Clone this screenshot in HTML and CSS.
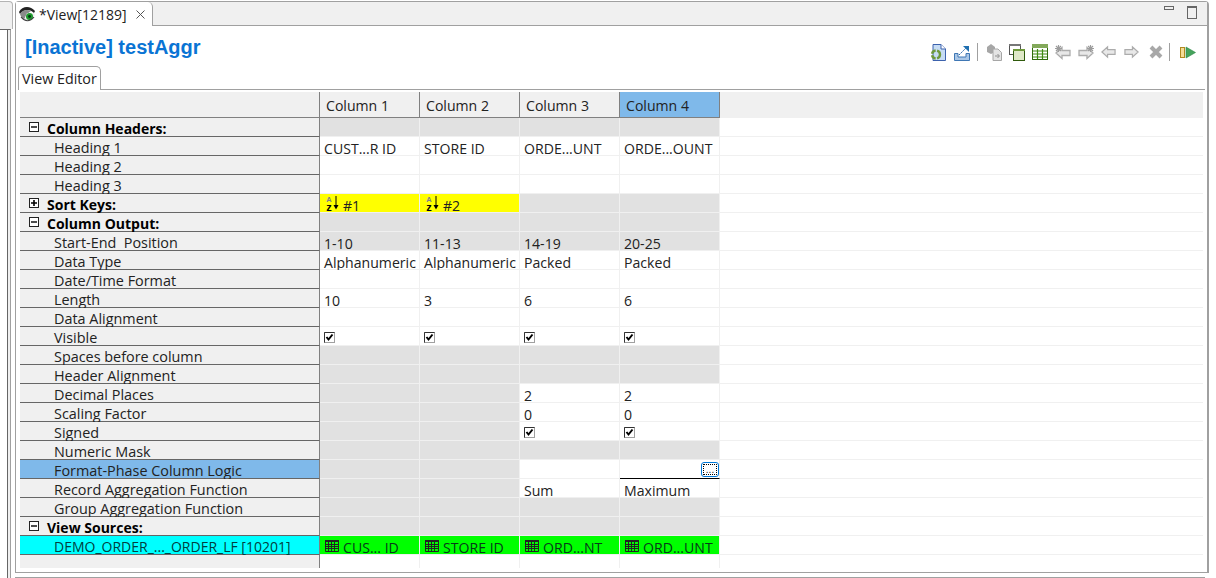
FILE: index.html
```html
<!DOCTYPE html>
<html lang="en">

<head>
  <meta charset="UTF-8">
  <title>View Editor</title>
  <link rel="stylesheet" href="styles.css">
</head>

<body>
  <!-- Shared icons -->
  <svg class="defs" width="0" height="0">
    <symbol id="i-check" viewBox="0 0 11 11">
      <rect x="0.5" y="0.5" width="10" height="10" fill="#fff" stroke="#a0a0a0"/>
      <path d="M0.5 10.5V0.5H10.5" fill="none" stroke="#333"/>
      <path d="M2.5 5L4.5 7.5L8.5 2.5" fill="none" stroke="#000" stroke-width="2"/>
    </symbol>
    <symbol id="i-grid" viewBox="0 0 14 12">
      <rect x="0" y="0" width="14" height="2" fill="#222"/>
      <path d="M0.5 0V11.5H13.5V0M0 4.5H14M0 6.5H14M0 8.5H14M3.5 2V12M6.5 2V12M9.5 2V12" fill="none" stroke="#222"/>
    </symbol>
    <symbol id="i-minus" viewBox="0 0 10 10">
      <rect x="0.5" y="0.5" width="9" height="9" fill="#fff" stroke="#222"/>
      <path d="M2 5H8" stroke="#000" stroke-width="1.4"/>
    </symbol>
    <symbol id="i-plus" viewBox="0 0 10 10">
      <rect x="0.5" y="0.5" width="9" height="9" fill="#fff" stroke="#222"/>
      <path d="M2 5H8M5 2V8" stroke="#000" stroke-width="1.6"/>
    </symbol>
    <symbol id="i-back" viewBox="0 0 16 16">
      <path d="M1 8L7 2.5V5.5H15V10.5H7V13.5Z" fill="#e8e8e8" stroke="#acacac" stroke-width="1.3"/>
    </symbol>
    <symbol id="i-star" viewBox="0 0 7 7">
      <path d="M3.5 0V7M0 3.5H7M1 1L6 6M6 1L1 6" stroke="#9c9c9c" stroke-width="1.2"/>
    </symbol>
  </svg>

  <div class="workbench">
    <div class="side">
      <div class="side-top"></div>
      <div class="side-panel"></div>
    </div>

    <div class="main">
      <section class="editor">
        <div class="tabbar">
          <div class="tab">
            <svg class="tab-icon" width="17" height="16" viewBox="0 0 17 16">
              <path d="M0 6C3 0 11 -1 16 5L15 7C11 3 5 3 1 8Z" fill="#222"/>
              <path d="M1 8C3 4 8 3 12 5L8 8L5 14C3 13 2 11 1 8Z" fill="#8a8a8a"/>
              <path d="M5 14L8 7H15L16 9C13 13 9 15 5 14Z" fill="#f0f0f0"/>
              <circle cx="10.5" cy="10.5" r="3.5" fill="#1f9a2e"/>
              <circle cx="10.5" cy="10.5" r="1.4" fill="#031"/>
              <path d="M2 11C6 16 11 16 15 11" fill="none" stroke="#444" stroke-width="1.2"/>
            </svg>
            <span class="tab-name">*View[12189]</span>
            <svg class="tab-close" width="9" height="9" viewBox="0 0 9 9">
              <path d="M0.5 0.5L8.5 8.5M8.5 0.5L0.5 8.5" stroke="#555"/>
            </svg>
          </div>
          <div class="win-btns">
            <span class="win-min"></span>
            <span class="win-max"></span>
          </div>
        </div>

        <div class="head">
          <h1 class="title">[Inactive] testAggr</h1>
          <div class="toolbar">
            <svg class="tool" viewBox="0 0 16 17">
              <path d="M3 0.5H11L15.5 5V16.5H3Z" fill="#c6dcf4" stroke="#3c62ad"/>
              <path d="M11 0.5V5H15.5" fill="#fff" stroke="#3c62ad"/>
              <circle cx="6" cy="10.5" r="4" fill="none" stroke="#6f9a3c" stroke-width="2.4" stroke-dasharray="5 1.5"/>
            </svg>
            <svg class="tool second" viewBox="0 0 16 17">
              <path d="M0.5 9.5H4V13H12V9.5H15.5V16.5H0.5Z" fill="#a9c6e6" stroke="#3f77b4"/>
              <path d="M5 11L12 4" stroke="#2a68a8" stroke-dasharray="2 1"/>
              <path d="M9 2H15V8Z" fill="#1f6fb0"/>
            </svg>
            <span class="tool-sep first"></span>
            <svg class="tool" viewBox="0 0 16 17">
              <path d="M1 3L5 0L9 3V8L5 10L1 8Z" fill="#a6a6a6"/>
              <path d="M7 5H12L15.5 8.5V16.5H7Z" fill="#e4e4e4" stroke="#a6a6a6"/>
              <path d="M9 12H13M11.5 10L13.5 12L11.5 14" fill="none" stroke="#8f8f8f"/>
            </svg>
            <svg class="tool" viewBox="0 0 16 17">
              <rect x="0.5" y="0.5" width="11" height="10" fill="#fff" stroke="#555"/>
              <rect x="0" y="0" width="12" height="2" fill="#777"/>
              <rect x="4.5" y="5.5" width="11" height="11" fill="#dfe8c8" stroke="#2f5a0c"/>
              <rect x="4" y="5" width="12" height="2" fill="#6f9a3c"/>
            </svg>
            <svg class="tool" viewBox="0 0 16 17">
              <rect x="0.5" y="0.5" width="15" height="15" fill="#fff" stroke="#2f6a0c"/>
              <rect x="0" y="0" width="16" height="4" fill="#83a95a"/>
              <path d="M1 7H15M1 10H15M1 13H15M5.5 5V15M10.5 5V15" stroke="#3f8a12" stroke-width="1.2"/>
            </svg>
            <svg class="tool" viewBox="0 0 16 17">
              <use href="#i-back" x="0" y="1" width="16" height="16"/>
              <use href="#i-star" x="0" y="1" width="7" height="7"/>
            </svg>
            <svg class="tool" viewBox="0 0 16 17">
              <use href="#i-back" class="flip" x="0" y="1" width="16" height="16"/>
              <use href="#i-star" x="9" y="1" width="7" height="7"/>
            </svg>
            <svg class="tool narrow" viewBox="0 0 16 17"><use href="#i-back" x="0" y="0" width="16" height="16"/></svg>
            <svg class="tool narrow" viewBox="0 0 16 17"><use href="#i-back" class="flip" x="0" y="0" width="16" height="16"/></svg>
            <svg class="tool cross" viewBox="0 0 14 14">
              <path d="M2 2L12 12M12 2L2 12" stroke="#a8a8a8" stroke-width="4"/>
            </svg>
            <span class="tool-sep"></span>
            <svg class="tool run" viewBox="0 0 16 17">
              <rect x="0.5" y="3.5" width="4" height="10" fill="#f6dc96" stroke="#b08a20"/>
              <path d="M6 3L15.5 8.5L6 14Z" fill="#45a35c" stroke="#2f8a48" stroke-width="0.6"/>
            </svg>
          </div>
        </div>

        <div class="subtabs">
          <div class="subtab">View Editor</div>
        </div>

        <div class="sheet">
          <div class="row top">
            <div class="label"></div>
            <div class="cell">Column 1</div>
            <div class="cell">Column 2</div>
            <div class="cell">Column 3</div>
            <div class="cell picked">Column 4</div>
            <div class="rest"></div>
          </div>

          <div class="row">
            <div class="label group"><svg class="tog"><use href="#i-minus"/></svg>Column Headers:</div>
            <div class="cell off"></div><div class="cell off"></div><div class="cell off"></div><div class="cell off"></div><div class="rest"></div>
          </div>
          <div class="row">
            <div class="label">Heading 1</div>
            <div class="cell">CUST...R ID</div><div class="cell">STORE ID</div><div class="cell">ORDE...UNT</div><div class="cell">ORDE...OUNT</div><div class="rest"></div>
          </div>
          <div class="row">
            <div class="label">Heading 2</div>
            <div class="cell"></div><div class="cell"></div><div class="cell"></div><div class="cell"></div><div class="rest"></div>
          </div>
          <div class="row">
            <div class="label">Heading 3</div>
            <div class="cell"></div><div class="cell"></div><div class="cell"></div><div class="cell"></div><div class="rest"></div>
          </div>
          <div class="row">
            <div class="label group"><svg class="tog"><use href="#i-plus"/></svg>Sort Keys:</div>
            <div class="cell key">
              <svg class="sort" viewBox="0 0 16 15">
                <text><tspan x="4" y="6" text-anchor="middle" class="az-a">A</tspan><tspan x="4" y="14.5" text-anchor="middle" class="az-z">z</tspan></text>
                <path d="M11 0V10" stroke="#000"/>
                <path d="M8.5 9H13.5L11 13.5Z" fill="#000"/>
              </svg>#1
            </div>
            <div class="cell key">
              <svg class="sort" viewBox="0 0 16 15">
                <text><tspan x="4" y="6" text-anchor="middle" class="az-a">A</tspan><tspan x="4" y="14.5" text-anchor="middle" class="az-z">z</tspan></text>
                <path d="M11 0V10" stroke="#000"/>
                <path d="M8.5 9H13.5L11 13.5Z" fill="#000"/>
              </svg>#2
            </div>
            <div class="cell off"></div><div class="cell off"></div><div class="rest"></div>
          </div>
          <div class="row">
            <div class="label group"><svg class="tog"><use href="#i-minus"/></svg>Column Output:</div>
            <div class="cell off"></div><div class="cell off"></div><div class="cell off"></div><div class="cell off"></div><div class="rest"></div>
          </div>
          <div class="row">
            <div class="label">Start-End&nbsp; Position</div>
            <div class="cell off">1-10</div><div class="cell off">11-13</div><div class="cell off">14-19</div><div class="cell off">20-25</div><div class="rest"></div>
          </div>
          <div class="row">
            <div class="label">Data Type</div>
            <div class="cell">Alphanumeric</div><div class="cell">Alphanumeric</div><div class="cell">Packed</div><div class="cell">Packed</div><div class="rest"></div>
          </div>
          <div class="row">
            <div class="label">Date/Time Format</div>
            <div class="cell"></div><div class="cell"></div><div class="cell"></div><div class="cell"></div><div class="rest"></div>
          </div>
          <div class="row">
            <div class="label">Length</div>
            <div class="cell">10</div><div class="cell">3</div><div class="cell">6</div><div class="cell">6</div><div class="rest"></div>
          </div>
          <div class="row">
            <div class="label">Data Alignment</div>
            <div class="cell"></div><div class="cell"></div><div class="cell"></div><div class="cell"></div><div class="rest"></div>
          </div>
          <div class="row">
            <div class="label">Visible</div>
            <div class="cell"><svg class="chk"><use href="#i-check"/></svg></div><div class="cell"><svg class="chk"><use href="#i-check"/></svg></div><div class="cell"><svg class="chk"><use href="#i-check"/></svg></div><div class="cell"><svg class="chk"><use href="#i-check"/></svg></div><div class="rest"></div>
          </div>
          <div class="row">
            <div class="label">Spaces before column</div>
            <div class="cell off"></div><div class="cell off"></div><div class="cell off"></div><div class="cell off"></div><div class="rest"></div>
          </div>
          <div class="row">
            <div class="label">Header Alignment</div>
            <div class="cell off"></div><div class="cell off"></div><div class="cell off"></div><div class="cell off"></div><div class="rest"></div>
          </div>
          <div class="row">
            <div class="label">Decimal Places</div>
            <div class="cell off"></div><div class="cell off"></div><div class="cell">2</div><div class="cell">2</div><div class="rest"></div>
          </div>
          <div class="row">
            <div class="label">Scaling Factor</div>
            <div class="cell off"></div><div class="cell off"></div><div class="cell">0</div><div class="cell">0</div><div class="rest"></div>
          </div>
          <div class="row">
            <div class="label">Signed</div>
            <div class="cell off"></div><div class="cell off"></div><div class="cell"><svg class="chk"><use href="#i-check"/></svg></div><div class="cell"><svg class="chk"><use href="#i-check"/></svg></div><div class="rest"></div>
          </div>
          <div class="row">
            <div class="label">Numeric Mask</div>
            <div class="cell off"></div><div class="cell off"></div><div class="cell off"></div><div class="cell off"></div><div class="rest"></div>
          </div>
          <div class="row">
            <div class="label active">Format-Phase Column Logic</div>
            <div class="cell off"></div><div class="cell off"></div><div class="cell"></div>
            <div class="cell editing"><button class="dots">...</button></div><div class="rest"></div>
          </div>
          <div class="row">
            <div class="label">Record Aggregation Function</div>
            <div class="cell off"></div><div class="cell off"></div><div class="cell">Sum</div><div class="cell">Maximum</div><div class="rest"></div>
          </div>
          <div class="row">
            <div class="label">Group Aggregation Function</div>
            <div class="cell off"></div><div class="cell off"></div><div class="cell off"></div><div class="cell off"></div><div class="rest"></div>
          </div>
          <div class="row">
            <div class="label group"><svg class="tog"><use href="#i-minus"/></svg>View Sources:</div>
            <div class="cell off"></div><div class="cell off"></div><div class="cell off"></div><div class="cell off"></div><div class="rest"></div>
          </div>
          <div class="row">
            <div class="label source">DEMO_ORDER_..._ORDER_LF [10201]</div>
            <div class="cell src"><svg class="grid"><use href="#i-grid"/></svg>CUS... ID</div>
            <div class="cell src"><svg class="grid"><use href="#i-grid"/></svg>STORE ID</div>
            <div class="cell src"><svg class="grid"><use href="#i-grid"/></svg>ORD...NT</div>
            <div class="cell src"><svg class="grid"><use href="#i-grid"/></svg>ORD...UNT</div>
            <div class="rest"></div>
          </div>
          <div class="row tail">
            <div class="label"></div>
            <div class="cell"></div><div class="cell"></div><div class="cell"></div><div class="cell"></div><div class="rest"></div>
          </div>
        </div>
      </section>
      <div class="next-panel"></div>
    </div>
  </div>
</body>

</html>
```

FILE: styles.css
```css
html, body {
  margin: 0;
  height: 578px;
  overflow: hidden;
  background: #fff;
  font-family: "Open Sans", "Noto Sans", sans-serif;
  font-size: 14px;
  color: #222;
}

.defs {
  position: absolute;
}

.workbench {
  display: flex;
  height: 578px;
}

/* Sliver of the neighbouring view */
.side {
  width: 15px;
  flex: none;
  display: flex;
  flex-direction: column;
}

.side-top {
  height: 28px;
  width: 13px;
  box-sizing: border-box;
  background: #f0f0f0;
  border-top: 1px solid #b4b4b4;
  border-right: 1px solid #b4b4b4;
  border-top-right-radius: 4px;
  margin-top: 1px;
  border-bottom: 0;
}

.side-panel {
  flex: 1;
  width: 11px;
  box-sizing: border-box;
  background: linear-gradient(to right, #fff 7px, #666 7px, #666 8px, #f0f0f0 8px);
  border-right: 1px solid #a0a0a0;
  border-top: 1px solid #666;
}

.main {
  width: 1194px;
  flex: none;
  display: flex;
  flex-direction: column;
}

.editor {
  margin-top: 1px;
  height: 572px;
  box-sizing: border-box;
  border: 1px solid #a0a0a0;
  border-right-width: 2px;
  border-top-left-radius: 4px;
  border-top-right-radius: 4px;
  display: flex;
  flex-direction: column;
}

.next-panel {
  margin-top: 4px;
  width: 1190px;
  flex: 1;
  background: #f0f0f0;
  border-top: 1px solid #a0a0a0;
}

/* Editor tab strip */
.tabbar {
  height: 24px;
  box-sizing: border-box;
  background: #f0f0f0;
  border-bottom: 1px solid #a0a0a0;
  display: flex;
  justify-content: space-between;
  flex: none;
}

.tab {
  width: 137px;
  height: 24px;
  box-sizing: border-box;
  background: #fff;
  border-right: 1px solid #a0a0a0;
  border-top-right-radius: 5px;
  display: flex;
  align-items: center;
  padding-left: 3px;
  font-size: 14px;
}

.tab-icon {
  flex: none;
  margin-right: 3px;
}

.tab-name {
  width: 97px;
}

.tab-close {
  flex: none;
}

.win-btns {
  display: flex;
  align-items: flex-start;
  gap: 13px;
  padding: 4px 10px 0 0;
}

.win-min {
  width: 10px;
  height: 4px;
  box-sizing: border-box;
  border: 1px solid #666;
}

.win-max {
  width: 10px;
  height: 13px;
  box-sizing: border-box;
  border: 1px solid #666;
  border-top-width: 2px;
}

/* Title and toolbar */
.head {
  height: 40px;
  flex: none;
  display: flex;
  justify-content: space-between;
  align-items: flex-start;
  padding: 0 11px 0 9px;
}

.title {
  margin: 9px 0 0;
  font-family: "Liberation Sans", Arial, sans-serif;
  font-size: 20px;
  line-height: 24px;
  font-weight: bold;
  color: #0a74d4;
}

.toolbar {
  display: flex;
  align-items: center;
  gap: 7px;
  margin-top: 17px;
}

.tool {
  width: 16px;
  height: 17px;
  flex: none;
}

.tool.second {
  margin-left: 1px;
}

.tool.narrow {
  width: 15px;
  margin-right: 1px;
}

.tool.cross {
  width: 14px;
  height: 14px;
  margin-left: 2px;
}

.tool.run {
  margin-left: 2px;
}

.tool-sep {
  width: 1px;
  height: 18px;
  background: #a0a0a0;
  margin-left: -1px;
  margin-right: 1px;
}

.tool-sep.first {
  margin-left: 0;
  margin-right: 1px;
}

.flip {
  transform: scaleX(-1);
  transform-origin: 8px 0;
}

/* Inner tab */
.subtabs {
  height: 24px;
  flex: none;
  box-sizing: border-box;
  margin: 0 2px 0 2px;
  border-bottom: 1px solid #a0a0a0;
}

.subtab {
  width: 83px;
  height: 24px;
  box-sizing: border-box;
  background: #fff;
  border: 1px solid #a0a0a0;
  border-bottom: 0;
  border-top-right-radius: 5px;
  border-top-left-radius: 3px;
  padding-left: 3px;
  line-height: 24px;
  font-size: 14.3px;
}

/* The property grid */
.sheet {
  margin: 2px 0 0 4px;
  width: 1183px;
}

.row {
  display: flex;
  height: 19px;
}

.row.top {
  height: 26px;
}

.row.tail {
  height: 13px;
}

.label {
  width: 300px;
  flex: none;
  box-sizing: border-box;
  background: #f0f0f0;
  border-bottom: 1px solid #666;
  border-right: 1px solid #808080;
  padding-left: 34px;
  line-height: 22px;
  font-size: 14.4px;
  white-space: nowrap;
}

.label.group {
  padding-left: 9px;
  font-size: 14px;
  font-weight: bold;
  color: #000;
  display: flex;
  align-items: flex-start;
}

.tog {
  width: 10px;
  height: 10px;
  flex: none;
  margin: 4px 8px 0 0;
}

.label.active {
  background: #7fb9ea;
}

.label.source {
  background: #00ffff;
  color: #004040;
  font-size: 14px;
}

.cell {
  width: 100px;
  flex: none;
  box-sizing: border-box;
  background: #fff;
  border-right: 1px solid #f0f0f0;
  border-bottom: 1px solid #f0f0f0;
  padding-left: 4px;
  line-height: 23px;
  font-size: 14.1px;
  white-space: nowrap;
}

.cell.off {
  background: #e1e1e1;
}

.cell.key {
  background: #ffff00;
  display: flex;
  align-items: flex-start;
}

/* Sort glyph: A over z next to a down arrow */
.sort {
  width: 16px;
  height: 15px;
  flex: none;
  margin: 2px 2px 0 1px;
  overflow: visible;
}

.az-a {
  font-family: "Liberation Sans", Arial, sans-serif;
  font-size: 7.5px;
  font-weight: bold;
  fill: #7c7c90;
}

.az-z {
  font-family: "Liberation Sans", Arial, sans-serif;
  font-size: 11px;
  font-weight: bold;
  fill: #000;
}

.cell.src {
  background: #00ff00;
  color: #063a1a;
  display: flex;
  align-items: flex-start;
}

.grid {
  width: 14px;
  height: 12px;
  flex: none;
  margin: 4px 4px 0 1px;
}

.chk {
  width: 11px;
  height: 11px;
  display: block;
  margin: 5px 0 0 0;
}

.cell.editing {
  border-bottom-color: #000;
  display: flex;
  justify-content: flex-end;
  align-items: flex-start;
  padding-top: 2px;
}

.dots {
  width: 18px;
  height: 15px;
  padding: 0;
  box-sizing: border-box;
  background: #fff;
  border: 1px solid #0078d7;
  border-radius: 3px;
  outline: 1px dotted #000;
  outline-offset: -3px;
  font-size: 10px;
  line-height: 12px;
  color: #222;
}

.rest {
  flex: 1;
  background: #fff;
  border-bottom: 1px solid #f0f0f0;
}

/* Column header row */
.top .label,
.top .cell {
  background: #f0f0f0;
  border-right: 1px solid #808080;
  border-bottom: 1px solid #808080;
}

.top .cell {
  padding-left: 6px;
  line-height: 27px;
}

.top .cell.picked {
  background: #7fb9ea;
}

.top .rest {
  background: #f0f0f0;
  border-bottom: 0;
}

.tail .label {
  border-bottom: 0;
}

.tail .cell,
.tail .rest {
  border-bottom: 0;
}
```
